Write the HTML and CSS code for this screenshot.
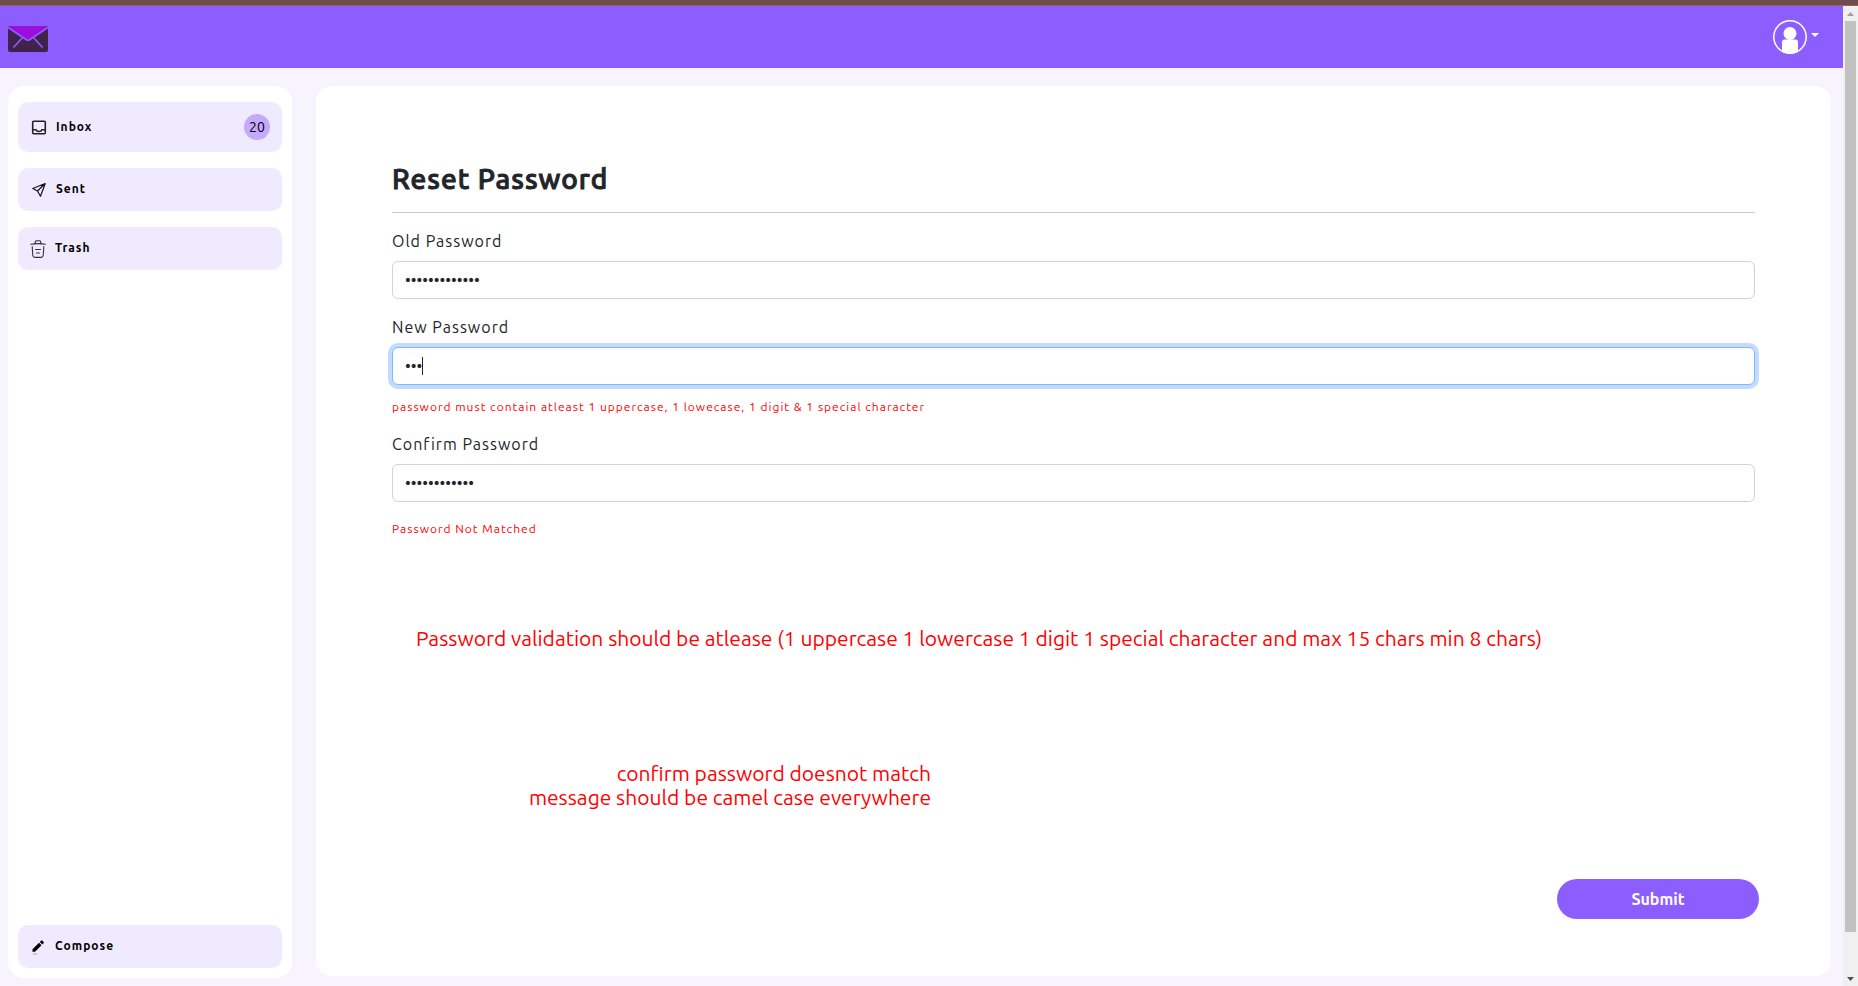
FILE: index.html
```html
<!DOCTYPE html>
<html lang="en">
<head>
<meta charset="utf-8">
<title>Reset Password</title>
<link rel="stylesheet" href="styles.css">
</head>
<body>
<div class="window-strip"></div>
<div class="viewport">
  <div class="page">
    <header class="topbar">
      <a class="brand" href="#" aria-label="Mail home">
        <svg width="40" height="26" viewBox="0 0 40 26">
          <rect width="40" height="26" rx="2" fill="#40224a"/>
          <path d="M1 0H39L40 2 22 14Q20 15 18 14L0 2Z" fill="#9b0fdc"/>
          <path d="M0 1.500 18 13.500Q20 15 22 13.500L40 1.500M15 11 5.500 21.500M25 11 34.500 21.500" fill="none" stroke="#8c5eff" stroke-width="1.600"/>
        </svg>
      </a>
      <button class="account" type="button" aria-label="Account menu">
        <svg width="34" height="34" viewBox="0 0 34 34">
          <circle cx="17" cy="17" r="16.200" fill="none" stroke="#fff" stroke-width="1.500"/>
          <circle cx="17" cy="13.500" r="6.500" fill="#fff"/>
          <path d="M9 32V22Q9 19.500 11.500 19.500H22.500Q25 19.500 25 22V32Q17 35 9 32Z" fill="#fff"/>
        </svg>
        <svg class="chevron" width="8" height="4" viewBox="0 0 8 4"><path d="M0 0H8L4 4Z" fill="#fff"/></svg>
      </button>
    </header>
    <div class="layout">
      <nav class="sidebar">
        <a class="item item-inbox" href="#">
          <svg width="16" height="16" viewBox="0 0 16 16" fill="none" stroke="#231f2b" stroke-width="1.600"><rect x="1.700" y="2.200" width="12.600" height="12.600" rx="1"/><path d="M2 10.800H5Q5.600 12.500 8 12.500T11 10.800H14"/></svg>
          <span class="item-text">Inbox</span><span class="badge">20</span>
        </a>
        <a class="item" href="#">
          <svg width="16" height="16" viewBox="0 0 16 16" fill="none" stroke="#15131a" stroke-width="1.200" stroke-linejoin="round"><path d="M14.200 1.500 1.800 6.500 6.500 9 9.500 14.200ZM14.200 1.500 6.500 9"/></svg>
          <span class="item-text">Sent</span>
        </a>
        <a class="item item-trash" href="#">
          <svg width="16" height="18" viewBox="0 0 16 18" fill="none" stroke="#35313d" stroke-width="1.100" stroke-linecap="round"><path d="M.600 4.200Q8 3 15.400 4.200M5 3.500 5.500 1.500Q5.700.700 6.500.700H9.500Q10.300.700 10.500 1.500L11 3.500M2.200 6.500 2.800 15.500Q3 17.400 4.800 17.400H11.200Q13 17.400 13.200 15.500L13.800 6.500M5.500 9.500H10.500M6.500 13H9.500"/></svg>
          <span class="item-text">Trash</span>
        </a>
        <a class="item item-trash item-compose" href="#">
          <svg width="16" height="16" viewBox="0 0 16 16"><path d="M2.500 10.200 9 3.800 11.500 6.300 5 12.700H2.500ZM9.800 3 11.300 1.500Q11.700 1.200 12.100 1.500L13.700 3.100Q14 3.500 13.700 3.900L12.300 5.500Z"/><path d="M3 15H7" stroke="#aaa5b8"/></svg>
          <span class="item-text">Compose</span>
        </a>
      </nav>
      <main class="panel">
        <form class="form">
          <h1>Reset Password</h1>
          <label for="old">Old Password</label>
          <input id="old" type="password" value="abcdefghijklm">
          <label for="new">New Password</label>
          <div class="field">
            <input id="new" class="active" type="password" value="abc">
            <span class="caret"></span>
          </div>
          <p class="error">password must contain atleast 1 uppercase, 1 lowecase, 1 digit &amp; 1 special character</p>
          <label for="confirm">Confirm Password</label>
          <input id="confirm" type="password" value="abcdefghijkl">
          <p class="error error-match">Password Not Matched</p>
          <p class="note">Password validation should be atlease (1 uppercase 1 lowercase 1 digit 1 special character and max 15 chars min 8 chars)</p>
          <p class="note note-match">confirm password doesnot match<br>message should be camel case everywhere</p>
          <button class="submit" type="button">Submit</button>
        </form>
      </main>
    </div>
  </div>
  <div class="scrollbar">
    <svg width="7" height="4" viewBox="0 0 7 4"><path d="M0 4H7L3.500 0Z" fill="#a0a0a0"/></svg>
    <div class="track"><div class="thumb"></div></div>
    <svg width="7" height="4" viewBox="0 0 7 4"><path d="M0 0H7L3.500 4Z" fill="#505050"/></svg>
  </div>
</div>
</body>
</html>
```
FILE: styles.css
```css
* { box-sizing: border-box; }
body {
  margin: 0;
  height: 100vh;
  display: flex;
  flex-direction: column;
  overflow: hidden;
  background: #f7f4ff;
  color: #212529;
  font: 16px/24px "Ubuntu", "Noto Sans", sans-serif;
}
.window-strip { flex: none; height: 6px; background: #704c4c; border-bottom: 1px solid #8b6463; }
.viewport { flex: 1; display: flex; min-height: 0; }
.page { flex: 1; display: flex; flex-direction: column; min-width: 0; }
.topbar {
  height: 62px;
  padding: 0 24px 0 8px;
  display: flex;
  align-items: center;
  justify-content: space-between;
  background: #8c5eff;
}
.brand { display: flex; padding-top: 4px; }
.account { display: flex; align-items: center; gap: 4px; padding: 0; border: 0; background: none; }
.chevron { margin-bottom: 4px; }
.layout { flex: 1; display: flex; gap: 24px; padding: 18px 12px 8px 8px; min-height: 0; }
.sidebar {
  width: 284px;
  flex: none;
  display: flex;
  flex-direction: column;
  gap: 16px;
  padding: 16px 10px 10px;
  border-radius: 16px;
  background: #fff;
}
.item {
  display: flex;
  align-items: center;
  gap: 9px;
  height: 43px;
  padding: 0 12px 0 13px;
  border-radius: 10px;
  background: #f0eaff;
  color: #000;
  font-size: 12px;
  font-weight: 700;
  text-decoration: none;
}
.item-text { padding-bottom: 2px; letter-spacing: 1px; }
.item-inbox { height: 50px; }
.item-inbox .item-text { padding-bottom: 0; }
.item-trash { padding-left: 12px; }
.item-compose { margin-top: auto; }
.badge {
  width: 26px;
  height: 26px;
  margin-left: auto;
  border-radius: 50%;
  background: #c4a9ff;
  font-size: 14px;
  font-weight: 400;
  line-height: 26px;
  text-align: center;
}
.panel { flex: 1; display: flex; margin-bottom: 2px; padding: 76px; border-radius: 16px; background: #fff; }
.form { flex: 1; display: flex; flex-direction: column; }
h1 {
  margin: 0 0 16px;
  padding-bottom: 17px;
  border-bottom: 1px solid #c8c9ca;
  font-size: 28px;
  font-weight: 500;
  line-height: 33px;
  letter-spacing: 1px;
  -webkit-text-stroke: 1px #212529;
}
label { margin-bottom: 8px; letter-spacing: 1px; }
input {
  width: 100%;
  height: 38px;
  margin-bottom: 16px;
  padding: 6px 12px;
  border: 1px solid #ced4da;
  border-radius: 6px;
  color: #212529;
  font: inherit;
}
.active { border-color: #86b7fe; box-shadow: 0 0 0 4px #c2dbfe; }
.field { position: relative; display: flex; }
.field input { margin: 0; }
.caret { position: absolute; left: 30px; top: 10px; width: 1px; height: 18px; background: #212529; }
.error { margin: 13px 0 16px; color: #f00; font-size: 12px; line-height: 18px; letter-spacing: 1px; }
.error-match { margin-top: 2px; }
.note { margin: 72px 0 0 24px; color: #f00; font-size: 21px; }
.note-match { margin-top: 111px; padding-right: 824px; text-align: right; margin-left: 0; }
.submit {
  width: 202px;
  height: 40px;
  margin: auto -4px -19px auto;
  border: 0;
  border-radius: 20px;
  background: #8c5eff;
  color: #fff;
  font: 700 16px/24px "Ubuntu", "Noto Sans", sans-serif;
}
.scrollbar {
  width: 15px;
  display: flex;
  flex-direction: column;
  align-items: center;
  padding: 6px 0 5px;
  background: #f0f0f0;
}
.track { flex: 1; display: flex; width: 11px; padding: 5px 0 45px; }
.thumb { flex: 1; background: #c1c1c1; }
```
